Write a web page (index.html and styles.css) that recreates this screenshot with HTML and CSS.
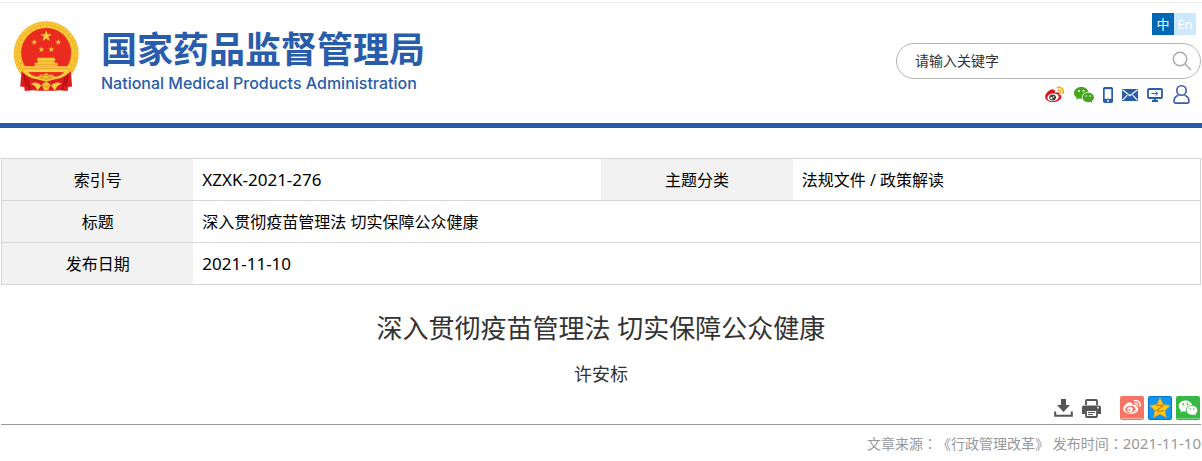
FILE: index.html
```html
<!DOCTYPE html>
<html lang="zh-CN">
<head>
<meta charset="utf-8">
<meta name="viewport" content="width=device-width, initial-scale=1">
<title>深入贯彻疫苗管理法 切实保障公众健康</title>
<link rel="stylesheet" href="styles.css">
</head>
<body>
<svg class="symbols" aria-hidden="true">
  <symbol id="star" viewBox="-10 -10 20 20"><path d="M0-10 2.4-3.2 9.5-3.1 3.8 1.2 5.9 8.1 0 4-5.9 8.1-3.8 1.2-9.5-3.1-2.4-3.2Z"/></symbol>
  <symbol id="wechat" viewBox="0 0 20 16">
    <path d="M7.4 0C3.300 0 0 2.700 0 6c0 1.900 1 3.500 2.700 4.600L2 12.800l2.600-1.400c.9.300 1.800.4 2.800.4h.5C7.100 8 10.200 4.800 14.400 4.900 13.700 2 10.900 0 7.400 0Z"/>
    <path d="M14.200 5.700c-3.200 0-5.700 2.100-5.700 4.700s2.500 4.700 5.700 4.700c.7 0 1.400-.1 2-.3l2.100 1.200-.5-1.900c1.300-.9 2.200-2.200 2.200-3.700 0-2.600-2.600-4.700-5.800-4.700Z"/>
    <g class="eyes"><circle cx="5" cy="4" r="1"/><circle cx="9.500" cy="4" r="1"/><circle cx="12.300" cy="9" r=".8"/><circle cx="16.200" cy="9" r=".8"/></g>
  </symbol>
</svg>

<header class="header">
  <a class="brand" href="#">
    <svg class="emblem" viewBox="10 7 204 216" role="img" aria-label="国徽">
      <circle cx="111" cy="107" r="99" fill="#f2b82c"/>
      <circle cx="111" cy="107" r="93" fill="none" stroke="#f8c93f" stroke-width="7" stroke-dasharray="9 4"/>
      <circle cx="111" cy="107" r="83" fill="none" stroke="#fbcf3c" stroke-width="5" stroke-dasharray="13 5"/>
      <circle cx="111" cy="104" r="76" fill="#e92b20"/>
      <g fill="#f9cf3a">
        <use href="#star" x="93" y="35" width="36" height="36"/>
        <use href="#star" x="65" y="62" width="19" height="19"/>
        <use href="#star" x="138" y="62" width="19" height="19"/>
        <use href="#star" x="87" y="84" width="19" height="19"/>
        <use href="#star" x="117" y="84" width="19" height="19"/>
      </g>
      <path d="M86 119h50l4 8h-4v7h10v11H76v-11h10v-7h-4Z" fill="#f8c83b"/>
      <path d="M83 129h56M77 139h68" stroke="#e79a20" stroke-width="2"/>
      <path d="M40 145h142l-8 18H48Z" fill="#f8cf45"/>
      <path d="M43 152h136" stroke="#df8e20" stroke-width="2"/>
      <path d="M56 163h110l-20 20H76Z" fill="#e92b20"/>
      <path d="M36 160c16 16 32 22 48 24l27 8 27-8c16-2 32-8 48-24l4 46-12 2-2 12-26-2-14 1H86l-14-1-26 2-2-12-12-2Z" fill="#dd1e1d"/>
      <path d="M43 169l8 37M52 177l9 40M178 169l-8 37M169 177l-9 40" stroke="#a90c15" stroke-width="4"/>
      <path d="M47 161c17 18 32 21 48 19M175 161c-17 18-32 21-48 19" fill="none" stroke="#f8cf43" stroke-width="7"/>
      <path d="M85 181q6-14 16-10l10-6 10 6q12-4 16 10l-15 2q-11 15-22 0Z" fill="#f5c335"/>
      <path d="M91 181q20-18 40 0M99 178l12 7 12-7" fill="none" stroke="#d98b18" stroke-width="3"/>
      <path d="M64 198q19-9 32 5l-12 17q-3-16-20-22ZM158 198q-19-9-32 5l12 17q3-16 20-22Z" fill="#f8ce41"/>
      <path d="M97 201q14-16 28 0l-8 17h-12Z" fill="#f5c335"/>
      <path d="M101 202l10 7 10-7" fill="none" stroke="#d98b18" stroke-width="3"/>
    </svg>
    <span class="brand-text">
      <span class="brand-cn">国家药品监督管理局</span>
      <span class="brand-en">National Medical Products Administration</span>
    </span>
  </a>
  <div class="tools">
    <nav class="langs" aria-label="语言">
      <a class="lang lang-on" href="#">中</a>
      <a class="lang" href="#">En</a>
    </nav>
    <form class="search">
      <input class="search-input" type="text" placeholder="请输入关键字" aria-label="请输入关键字">
      <button class="search-button" type="button" aria-label="搜索">
        <svg viewBox="0 0 20 20" width="20" height="20" fill="none" stroke="#aaa" stroke-width="1.500"><circle cx="8" cy="8" r="6.700"/><path d="m13 13 6 6"/></svg>
      </button>
    </form>
    <nav class="links" aria-label="快捷入口">
      <a href="#" aria-label="微博"><svg viewBox="0 0 20 17" width="20" height="17">
        <path d="M8 3.500C6.200 2.300 0 6.700.2 11.200c.2 3 4 5 8 4.800 4.500-.2 8.300-2.500 8.200-5.300 0-1.500-1-2-2-2.300.5-1.900-.7-3-4.400-1.700.4-1.600 0-2.500-2-3.200Z" fill="#e0121b"/>
        <ellipse cx="8" cy="11.300" rx="5.800" ry="3.800" transform="rotate(-8 8 11.300)" fill="#fff"/>
        <ellipse cx="7.600" cy="11.500" rx="3.400" ry="3" fill="#444"/><circle cx="6.400" cy="12.200" r="1.100" fill="#fff"/><circle cx="8.600" cy="10.900" r=".6" fill="#fff"/>
        <path d="M12.500 1.500c4-.8 6.800 2.200 5.500 6M13 4.300c2-.3 3 .8 2.500 2.700" fill="none" stroke="#f3ac18" stroke-width="1.600" stroke-linecap="round"/>
      </svg></a>
      <a class="wechat" href="#" aria-label="微信"><svg width="20" height="16"><use href="#wechat"/></svg></a>
      <a href="#" aria-label="手机"><svg viewBox="0 0 10 16" width="10" height="16"><rect width="10" height="16" rx="1.800" fill="#295cab"/><path d="M1.700 2.200h6.600v9.600H1.700Z" fill="#fff"/><circle cx="5" cy="13.900" r="1" fill="#fff"/></svg></a>
      <a href="#" aria-label="邮箱"><svg viewBox="0 0 16 12" width="16" height="12"><path d="M0 0h16v12H0Z" fill="#295cab"/><path d="m.5.800 7.500 6 7.500-6M.6 11.200l4.700-5M15.400 11.200l-4.700-5" fill="none" stroke="#fff" stroke-width="1.200"/></svg></a>
      <a href="#" aria-label="电脑版"><svg viewBox="0 0 16 14" width="16" height="14" fill="none" stroke="#295cab"><rect x="1" y="1" width="14" height="9" rx="1" stroke-width="1.800"/><path d="M4.500 5.500h6M8.500 3.300l2.300 2.200-2.300 2.200"/><path d="M8 10v2.500M5 13h6" stroke-width="2"/></svg></a>
      <a class="user" href="#" aria-label="个人中心"><svg viewBox="0 0 17 19" width="17" height="19" fill="none" stroke="#3d5bae" stroke-width="1.600"><circle cx="8.500" cy="5.500" r="4.700"/><path d="M5.500 10.200C2.500 11.200 1 13.500 1 16.500c0 1 .4 1.600 1.500 1.600h12c1.100 0 1.500-.6 1.500-1.600 0-3-1.500-5.300-4.500-6.300"/></svg></a>
    </nav>
  </div>
</header>

<main class="main">
  <table class="info">
    <tbody>
      <tr><th scope="row">索引号</th><td class="latin">XZXK-2021-276</td><th scope="row">主题分类</th><td>法规文件 / 政策解读</td></tr>
      <tr><th scope="row">标题</th><td colspan="3">深入贯彻疫苗管理法 切实保障公众健康</td></tr>
      <tr><th scope="row">发布日期</th><td class="latin" colspan="3">2021-11-10</td></tr>
    </tbody>
  </table>
  <h1 class="title">深入贯彻疫苗管理法 切实保障公众健康</h1>
  <p class="author">许安标</p>
  <div class="actions">
    <button class="action" type="button" aria-label="下载"><svg viewBox="0 0 20 18" width="20" height="18"><path d="M7 0h5v6h4l-6.500 7L3 6h4Z" fill="#555"/><path d="M1.200 12.500v4.300h16.600v-4.300" fill="none" stroke="#555" stroke-width="2"/></svg></button>
    <button class="action" type="button" aria-label="打印"><svg viewBox="0 0 20 19" width="20" height="19"><path d="M4 6V2q0-1 1-1h9q1 0 1 1v4" fill="none" stroke="#555" stroke-width="1.800"/><path d="M2 6.500h15q2 0 2 2V15h-3.500v-4h-12v4H0V8.500q0-2 2-2Z" fill="#555"/><path d="M4 11h11v6q0 1-1 1H5q-1 0-1-1Z" fill="#fff" stroke="#555" stroke-width="1.800"/><path d="M6 13.500h7M6 15.500h5" stroke="#555"/><circle cx="16" cy="8.700" r=".9" fill="#fff"/></svg></button>
    <span class="shares">
      <a href="#" aria-label="分享到微博"><svg viewBox="0 0 24 24" width="24" height="24"><rect width="24" height="24" rx="2" fill="#f67464"/><path d="M1 22.500h22" stroke="#ffb0a4"/>
        <path d="M10 6.500c-1.600-1-6.700 3-6.700 6.600 0 2.700 3.300 4.700 7.300 4.700 4.200 0 7.700-2.300 7.700-4.900 0-1.300-1-2-2-2.200.5-1.600-.7-2.700-4-1.600.3-1.400-.2-2.400-2.300-2.600Z" fill="#fff"/><ellipse cx="10.300" cy="13.200" rx="5.200" ry="3.500" transform="rotate(-8 10.300 13.200)" fill="#f67464"/><circle cx="10" cy="13.500" r="2.700" fill="#fff"/><circle cx="9.300" cy="14" r="1" fill="#f67464"/>
        <path d="M14.500 4.800c3.800-.8 6.700 2 5.500 5.500M15 7.300c1.800-.3 2.800.7 2.400 2.400" fill="none" stroke="#fff" stroke-width="1.400" stroke-linecap="round"/></svg></a>
      <a href="#" aria-label="分享到QQ空间"><svg viewBox="0 0 24 24" width="24" height="24"><rect width="24" height="24" rx="2" fill="#0877cf"/><rect x="1" y="1" width="22" height="22" rx="1" fill="#0c98f4"/><path d="m12 2 3.100 6.600 7.100.9-5.200 5 1.300 7.100-6.300-3.500-6.300 3.500L7 14.500l-5.200-5 7.100-.9Z" fill="#ffc81c" stroke="#e89a12" stroke-width=".7"/><path d="M8.300 9.500h6.900l-6.700 5.200q3.500 1.200 7.500 0" fill="none" stroke="#c98a10" stroke-width="1.400"/></svg></a>
      <a class="share-wechat" href="#" aria-label="分享到微信"><svg viewBox="0 0 24 24" width="24" height="24"><rect width="24" height="24" rx="2" fill="#36b944"/><path d="M1 22.500h22" stroke="#79d681"/><use href="#wechat" x="2.500" y="4" width="19" height="16" fill="#fff"/></svg></a>
    </span>
  </div>
  <p class="source">文章来源<span class="colon" lang="zh-TW">：</span>《行政管理改革》 发布时间<span class="colon" lang="zh-TW">：</span><time class="date" datetime="2021-11-10">2021-11-10</time></p>
</main>
</body>
</html>
```

FILE: styles.css
```css
* { box-sizing: border-box; }

body {
  margin: 0;
  padding-top: 2px;
  background: #fff;
  color: #000;
  font: 16px/24px "Noto Sans", "Noto Sans CJK SC", sans-serif;
}

a { color: inherit; text-decoration: none; }
svg { display: block; }
button { padding: 0; border: 0; background: none; cursor: pointer; }
.symbols { position: absolute; width: 0; height: 0; }

.header {
  display: flex;
  justify-content: space-between;
  align-items: flex-start;
  border-top: 1px solid #eee;
  border-bottom: 5px solid #2859a8;
}

.brand { display: flex; gap: 21px; padding: 18px 0 0 13px; color: #295cab; }
.emblem { width: 67px; height: 71px; }
.brand-text { display: flex; flex-direction: column; }
.brand-cn { font: bold 36px/52px "Noto Sans CJK SC", sans-serif; }
.brand-en { font: 500 16px/20px Inter, sans-serif; }

.tools { display: flex; flex-direction: column; align-items: flex-end; padding: 10px 1px 19px 0; }
.langs { display: flex; margin-right: 5px; }
.lang { width: 22px; height: 22px; background: #cce8ff; color: #fff; font-size: 13px; line-height: 22px; text-align: center; }
.lang-on { background: #0068b7; }

.search {
  display: flex;
  align-items: center;
  width: 305px;
  height: 36px;
  margin-top: 8px;
  padding: 0 8px 0 18px;
  border: 1px solid #b5b5b5;
  border-radius: 18px;
}
.search-input {
  flex: 1;
  min-width: 0;
  padding: 0 0 2px;
  border: 0;
  outline: 0;
  background: none;
  font: 14px/20px "Noto Sans CJK SC", sans-serif;
}
.search-input::placeholder { color: #333; opacity: 1; }

.links { display: flex; align-items: center; gap: 9px; height: 19px; margin: 6px 11px 0 0; }
.wechat { fill: #45a51c; --eyes: #fff; }
.user { margin-left: 1px; }
.eyes { fill: var(--eyes); }
.share-wechat { --eyes: #36b944; }

.main { padding: 30px 1px 0; }

.info { width: 100%; table-layout: fixed; border-collapse: collapse; border: 1px solid #d6d6d6; }
.info tr { height: 42px; border-bottom: 1px solid #d6d6d6; }
.info th { width: 16%; padding: 0; background: #f2f2f2; font-weight: normal; text-align: center; }
.info td { width: 34%; padding: 0 9px; }
.info .latin { font-size: 17px; }

.title { margin: 23px 0 0; color: #333; font-size: 26px; line-height: 40px; font-weight: normal; text-align: center; }
.author { margin: 12px 0 0; color: #333; font-size: 18px; line-height: 28px; text-align: center; }

.actions { display: flex; justify-content: flex-end; align-items: center; gap: 8px; margin-top: 8px; padding: 0 1px 4px 0; border-bottom: 1px solid #999; }
.shares { display: flex; gap: 4px; margin-left: 10px; }

.source { margin: 7px 0 0; color: #999; font-size: 14px; line-height: 22px; text-align: right; text-spacing-trim: space-all; }
.colon { font-family: "Noto Sans CJK TC", sans-serif; }
.date { font-size: 15px; }
```
